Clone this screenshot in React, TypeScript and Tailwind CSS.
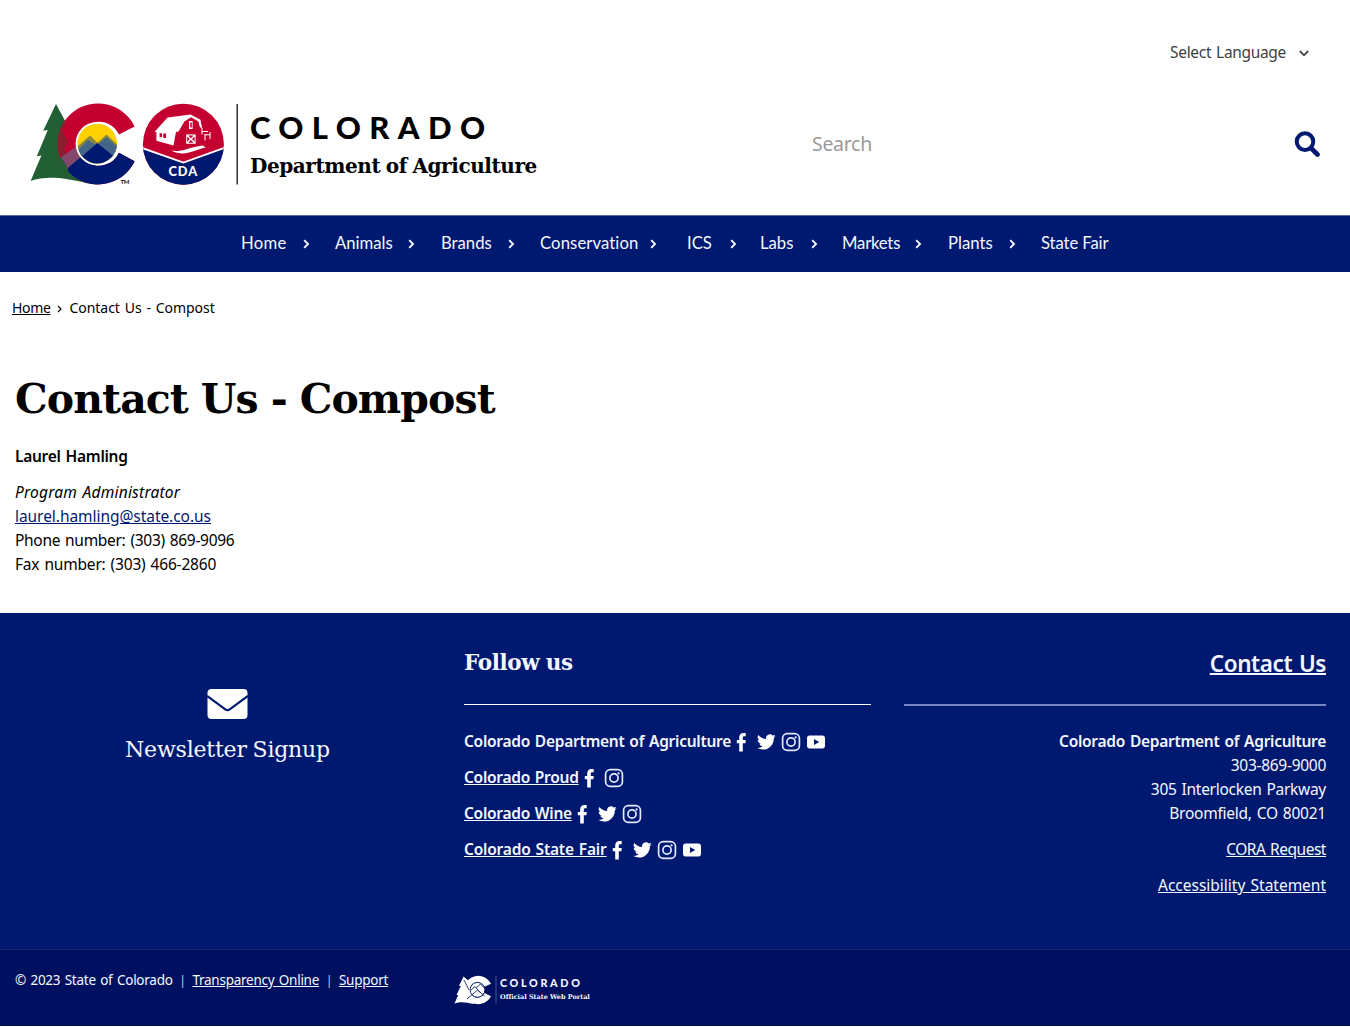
import type { ReactNode } from "react";

const NAV = [
  { label: "Home", item: "w-[94px]", gap: "pr-[25px]", text: "tracking-[0.3px]" },
  { label: "Animals", item: "w-[106px]", gap: "pr-[26px]", text: "" },
  { label: "Brands", item: "w-[99px]", gap: "pr-[25px]", text: "" },
  { label: "Conservation", item: "w-[147px]", gap: "pr-[30px]", text: "tracking-[0.1px]" },
  { label: "ICS", item: "w-[73px]", gap: "pr-[23px]", text: "" },
  { label: "Labs", item: "w-[82px]", gap: "pr-[24px]", text: "" },
  { label: "Markets", item: "w-[106px]", gap: "pr-[26px]", text: "tracking-[-0.2px]" },
  { label: "Plants", item: "w-[93px]", gap: "pr-[25px]", text: "" },
  { label: "State Fair", item: "w-[68px]", gap: "", text: "tracking-[-0.1px]" },
];

function Chevron() {
  return (
    <svg width="7" height="10" viewBox="0 0 7 10" fill="none" stroke="currentColor" strokeWidth="1.9" className="mt-[2px]">
      <path d="M1.2 1.2 5 5 1.2 8.8" />
    </svg>
  );
}

function Emblem() {
  return (
    <svg width="212" height="92" viewBox="28 98 212 92" aria-label="Colorado">
      <defs>
        <clipPath id="ring">
          <path d="M134.6 126.6A40.5 40.5 0 1 0 134.6 161.2L119 152.8A22 22 0 1 1 119 134.6Z" />
        </clipPath>
        <clipPath id="sun">
          <circle cx="97.3" cy="143.6" r="19.8" />
        </clipPath>
        <clipPath id="badge">
          <circle cx="183.4" cy="144.2" r="40.5" />
        </clipPath>
      </defs>
      <path fill="#235f35" d="M56 104 43.2 130.8 47.8 130 36.8 156.2 41.4 155.4 30.6 181C45 176 62 177 88 183.5L98 160 82 112 70 130Z" />
      <g clipPath="url(#ring)">
        <rect x="55" y="100" width="85" height="88" fill="#c3002f" />
        <path fill="#8c1d31" d="M56 104 66 124 62 130 68 142 64.5 148 68 160 50 182V104Z" />
        <path fill="#85476b" d="M84 141 60 158 64 170 68 174 92 152Z" />
        <path fill="#001970" d="M97.3 143 66 169.5C72 177 80 186 98 186H140V152L112 148Z" />
        <path fill="#235f35" d="M55 158 62 158 68.5 169.5 66.6 171.5C69 175 73 179.5 78 182.5L50 182Z" />
      </g>
      <circle cx="97.3" cy="143.6" r="21.7" fill="#fff" />
      <g clipPath="url(#sun)">
        <rect x="76" y="122" width="43" height="43" fill="#ffd100" />
        <path fill="#8a8a3a" d="M90 135.4 72 151V166H97L101 146Z" />
        <path fill="#8a8a3a" d="M106.5 134.6 96 144 104 150 122 149Z" />
        <path fill="#446688" d="M106.5 137 98 144.5 112 158 122 160V151Z" />
        <path fill="#446688" d="M88 140 76 152 80 160 96 145Z" />
        <path fill="#001970" d="M97.3 143 74 163V168H122V163Z" />
      </g>
      <g clipPath="url(#badge)">
        <rect x="142" y="103" width="83" height="83" fill="#c3002f" />
        <path fill="#001970" d="M142 148.7 183.4 163.4 225 148.2V186H142Z" />
        <path fill="none" stroke="#fff" strokeWidth="1.9" d="M142 148 183.4 162.6 225 147.6" />
      </g>
      <g fill="#fff">
        <path d="M167.6 117.5 190.5 114.6 200.5 119.8 202.2 128.5 199.8 127 198.3 121.6 191.2 117.2 184.6 121.2 178.5 131.5 176 132 173.5 145.5 156.4 140.8V132.2L154.6 131.8Z" />
        <path d="M189 121h3.6v8H189z" />
        <path d="M186.2 134.4h9.4v9.4h-9.4z" />
        <path d="M171 150.6C181 152.5 190 147 202.2 145.4L206 147.2C196 149.5 190 153.6 182 153.4 177 153.4 174 152 171 150.6Z" />
      </g>
      <g fill="#c3002f">
        <path d="M159.6 133.2h2.4v4h-2.4zM163.3 133.6h2.8v4.4h-2.8zM190.2 122.4h1.6v5h-1.6z" />
        <path d="m188.2 135.4 2.7 2.8 2.7-2.8zM188.2 142.8l2.7-2.8 2.7 2.8zM187.2 136.5l2.6 2.6-2.6 2.6zM194.6 136.5l-2.6 2.6 2.6 2.6z" />
      </g>
      <path fill="none" stroke="#fff" strokeWidth="1" d="M202 128v6.5M202 131.5h6M204.5 134.8h5.8M205 134v6.5M210 132v7" />
      <text x="168.4" y="176" fill="#fff" fontFamily="Lato" fontWeight="900" fontSize="12.8" letterSpacing="1">CDA</text>
      <text x="120.4" y="183.8" fill="#111" fontFamily="Lato" fontWeight="700" fontSize="6">TM</text>
      <path stroke="#222" strokeWidth="1.4" d="M237.2 104V184.6" />
    </svg>
  );
}

function Facebook() {
  return (
    <svg width="24" height="24" viewBox="0 0 24 24" fill="#fff" className="mt-px">
      <path d="M8.2 21.6V13.2H5.8V9.9h2.4V7.6c0-2.9 1.5-4.7 4.4-4.7h2.1v3.3h-1.5c-1.1 0-1.4.5-1.4 1.6v2.1h3l-.4 3.3H11.8v8.4z" />
    </svg>
  );
}

function Twitter() {
  return (
    <svg width="25" height="24" viewBox="0 0 25 24" fill="#fff" className="mt-px">
      <path transform="translate(2 2.6) scale(.78)" d="M23.95 4.57a10 10 0 0 1-2.82.78 4.96 4.96 0 0 0 2.16-2.73c-.95.56-2 .96-3.13 1.19a4.92 4.92 0 0 0-8.38 4.48C7.69 8.1 4.07 6.13 1.64 3.16a4.92 4.92 0 0 0 1.52 6.57 4.9 4.9 0 0 1-2.23-.61v.06a4.92 4.92 0 0 0 3.95 4.83 5 5 0 0 1-2.21.08 4.94 4.94 0 0 0 4.6 3.42A9.87 9.87 0 0 1 0 19.54a14 14 0 0 0 7.55 2.21c9.05 0 14-7.5 14-13.98 0-.21 0-.42-.02-.63a9.94 9.94 0 0 0 2.46-2.55z" />
    </svg>
  );
}

function Instagram() {
  return (
    <svg width="25" height="24" viewBox="0 0 25 24" fill="none" stroke="#e4eaff" strokeWidth="1.7" className="mt-px">
      <rect x="2.6" y="3.7" width="16.8" height="16.6" rx="4.6" />
      <circle cx="11" cy="12" r="4.1" />
      <circle cx="15.6" cy="7.4" r="1.1" fill="#e4eaff" stroke="none" />
    </svg>
  );
}

function Youtube() {
  return (
    <svg width="25" height="24" viewBox="0 0 25 24" className="mt-px">
      <path fill="#fff" d="M4.7 5.4h12.6c2 0 2.7 1 2.7 3v7.2c0 2-.7 3-2.7 3H4.7c-2 0-2.7-1-2.7-3V8.4c0-2 .7-3 2.7-3z" />
      <path fill="#001970" d="m9 9 5.3 3-5.3 3z" />
    </svg>
  );
}

function SocialRow({ children, link, icons }: { children: ReactNode; link?: boolean; icons: ReactNode }) {
  return (
    <div className="flex h-9 items-start">
      <span className={link ? "font-semibold underline underline-offset-1" : "font-semibold"}>{children}</span>
      <span className="flex">{icons}</span>
    </div>
  );
}

function PortalMark() {
  return (
    <svg width="44" height="32" viewBox="0 0 44 32">
      <path fill="#fff" d="M9.5 2.5 5 12h1.8L2.5 21h1.7L0.5 29.5C7 27 13 28.5 20 30L16 8z" />
      <path fill="#fff" d="M37 9.8A14.2 14.2 0 1 0 37 22.2L30.5 19A7.7 7.7 0 1 1 30.5 12.8z" />
      <circle cx="23.5" cy="15.8" r="7.4" fill="#fff" stroke="#001060" strokeWidth=".9" />
      <path fill="none" stroke="#001060" strokeWidth=".8" d="m13 25 10.5-9 7 6M17 16l4-3.5 5 6M22 14l4.5-4 5 5.5M10 6l5 10" />
      <path stroke="#5a68a8" strokeWidth=".8" d="M42 2v27.5" />
    </svg>
  );
}

export default function App() {
  return (
    <div className="h-[1027px] w-[1350px] overflow-hidden bg-white font-['Noto_Sans',sans-serif] text-[15.5px] leading-6 tracking-[-0.28px] whitespace-nowrap text-black [word-spacing:1.2px]">
      <header className="flex h-[215px] flex-col">
        <div className="flex h-[104px] items-center justify-end pr-[41px] tracking-[-0.32px] text-[#3f3f3f]">
          <span>Select Language</span>
          <svg width="10" height="7" viewBox="0 0 10 7" fill="none" stroke="#444" strokeWidth="1.8" className="ml-[13px] mt-[2px]">
            <path d="m.8 1 4.2 4.3L9.2 1" />
          </svg>
        </div>
        <div className="-mt-[6px] flex">
          <div className="ml-7 flex w-[784px]">
            <Emblem />
            <div className="ml-[10px] flex flex-col">
              <span className="mt-[10px] font-['Lato',sans-serif] text-[31px] leading-[38px] font-black tracking-[8.4px]">COLORADO</span>
              <span className="mt-[6px] font-['DejaVu_Serif',serif] text-[20px] leading-[28px] font-bold tracking-[-0.42px] [word-spacing:-1px]">Department of Agriculture</span>
            </div>
          </div>
          <div className="flex h-[92px] w-[508px] items-center justify-between">
            <span className="text-[19.5px] tracking-[-0.3px] text-[#999]">Search</span>
            <svg width="26" height="26" viewBox="0 0 26 26" fill="none" stroke="#001970">
              <circle cx="11" cy="10.6" r="8.3" strokeWidth="4" />
              <path strokeWidth="4.6" strokeLinecap="round" d="m17.5 17.5 6 6" />
            </svg>
          </div>
        </div>
      </header>

      <nav className="flex h-[57px] items-center border-t border-[#5b6aa5] bg-[#001970] pb-[2px] pl-[241px] font-['Lato',sans-serif] text-[16.7px] tracking-normal text-[#f4f7ff] [font-variant-ligatures:none] [word-spacing:0]">
        {NAV.map((n) => (
          <div key={n.label} className={`flex items-center justify-between ${n.item} ${n.gap}`}>
            <span className={n.text}>{n.label}</span>
            {n.gap && <Chevron />}
          </div>
        ))}
      </nav>

      <main className="h-[341px]">
        <div className="flex items-center pt-6 pl-3 text-[14px] tracking-[-0.03px]">
          <span className="tracking-[-0.35px] underline underline-offset-1">Home</span>
          <svg width="6" height="8" viewBox="0 0 6 8" fill="none" stroke="#000" strokeWidth="1.2" className="ml-[7px] mr-[6px] mt-[1px]">
            <path d="M1 1l3 3-3 3" />
          </svg>
          <span>Contact Us - Compost</span>
        </div>
        <h1 className="mt-[54px] pl-[15px] font-['DejaVu_Serif',serif] text-[41px] leading-[50px] font-bold tracking-[-0.9px] [word-spacing:-0.5px]">Contact Us - Compost</h1>
        <div className="mt-5 pl-[15px]">
          <p className="mb-3 font-semibold">Laurel Hamling</p>
          <p className="tracking-[0.22px] italic">Program Administrator</p>
          <p><span className="tracking-[-0.05px] text-[#001970] underline underline-offset-1">laurel.hamling@state.co.us</span></p>
          <p className="tracking-[-0.3px]">Phone number: (303) 869-9096</p>
          <p className="tracking-[-0.19px]">Fax number: (303) 466-2860</p>
        </div>
      </main>

      <footer className="text-[#f4f7ff]">
        <div className="flex h-[336px] bg-[#001970]">
          <div className="flex w-[455px] flex-col items-center pt-[76px]">
            <svg width="41" height="30" viewBox="0 0 41 30">
              <rect x=".5" y="0" width="40" height="30" rx="4" fill="#fff" />
              <path fill="none" stroke="#001970" strokeWidth="2.2" d="M0 7 18.3 20.3Q20.5 21.8 22.7 20.3L41 7" />
            </svg>
            <span className="mt-4 font-['DejaVu_Serif',serif] text-[22px] leading-[30px] tracking-[-0.2px] [word-spacing:-1px]">Newsletter Signup</span>
          </div>
          <div className="ml-[9px] w-[407px] pt-9">
            <div className="h-[56px] border-b border-white font-['DejaVu_Serif',serif] text-[21.5px] leading-[27px] font-bold tracking-[-0.35px] [word-spacing:-1px]">Follow us</div>
            <div className="pt-6">
              <SocialRow icons={<><Facebook /><Twitter /><Instagram /><Youtube /></>}>Colorado Department of Agriculture</SocialRow>
              <SocialRow link icons={<><Facebook /><Instagram /></>}>Colorado Proud</SocialRow>
              <SocialRow link icons={<><Facebook /><Twitter /><Instagram /></>}>Colorado Wine</SocialRow>
              <SocialRow link icons={<><Facebook /><Twitter /><Instagram /><Youtube /></>}><span className="tracking-[-0.2px]">Colorado State Fair</span></SocialRow>
            </div>
          </div>
          <div className="ml-[33px] w-[422px] pt-9 text-right">
            <div className="h-[57px] border-b-2 border-[#7686c0] text-[22.5px] leading-[30px] font-semibold tracking-[-0.4px]"><span className="underline decoration-2 underline-offset-1">Contact Us</span></div>
            <div className="pt-[23px]">
              <p className="font-semibold">Colorado Department of Agriculture</p>
              <p>303-869-9000</p>
              <p>305 Interlocken Parkway</p>
              <p className="tracking-[-0.24px]">Broomfield, CO 80021</p>
              <p className="mt-3"><span className="tracking-[-0.48px] underline underline-offset-1">CORA Request</span></p>
              <p className="mt-3"><span className="tracking-[-0.01px] underline underline-offset-1">Accessibility Statement</span></p>
            </div>
          </div>
        </div>
        <div className="flex h-[77px] border-t border-[#10257b] bg-[#001060]">
          <div className="w-[454px] pt-[18px] pl-[15px] text-[13.5px] tracking-[-0.26px]">
            <span>© 2023 State of Colorado</span>
            <span className="mx-[6.4px] font-light">|</span>
            <span className="underline underline-offset-1">Transparency Online</span>
            <span className="mx-[6.4px] font-light">|</span>
            <span className="underline underline-offset-1">Support</span>
          </div>
          <div className="flex pt-6">
            <PortalMark />
            <div className="ml-[2px] flex flex-col">
              <span className="mt-[2px] font-['Lato',sans-serif] text-[10.8px] leading-[14px] font-black tracking-[2.65px]">COLORADO</span>
              <span className="mt-[3px] font-['DejaVu_Serif',serif] text-[6.5px] leading-[9px] font-bold tracking-[-0.02px] [word-spacing:0]">Official State Web Portal</span>
            </div>
          </div>
        </div>
      </footer>
    </div>
  );
}
